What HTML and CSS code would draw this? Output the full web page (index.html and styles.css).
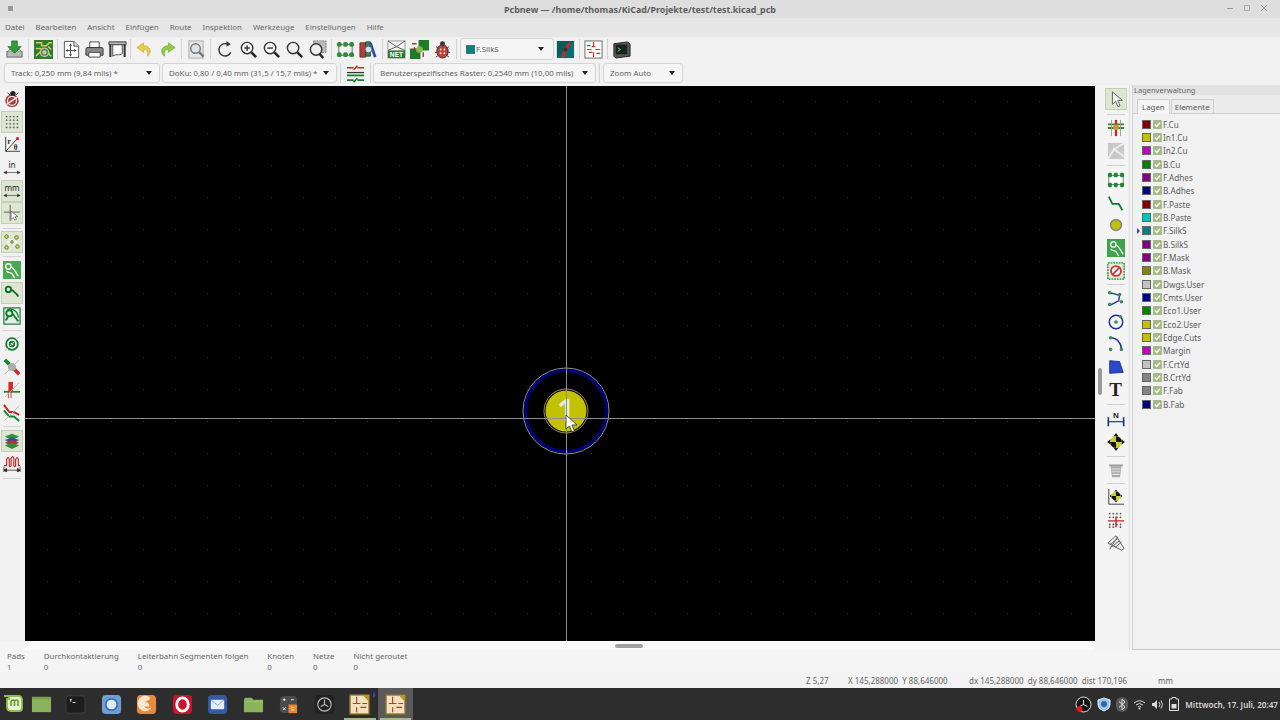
FILE: index.html
```html
<!DOCTYPE html>
<html lang="de">
<head>
<meta charset="utf-8">
<title>Pcbnew</title>
<link rel="stylesheet" href="styles.css">
</head>
<body>
<svg class="defs" width="0" height="0">
  <symbol id="chk" viewBox="0 0 9 9"><rect width="9" height="9" rx="1" fill="#a4ba8c"/><path d="M2 4.6l1.8 1.8L7 2.8" fill="none" stroke="#fff" stroke-width="1.4"/></symbol>
  <symbol id="viaicon" viewBox="0 0 20 20"><path d="M3 15l3-5" stroke="#0b7a32" stroke-width="2" fill="none"/><circle cx="7" cy="7" r="3.4" fill="none" stroke="#0b7a32" stroke-width="2"/><path d="M10 8c3 0 2 3 4 4l3 4" stroke="#0b7a32" stroke-width="2" fill="none"/><path d="M5 3c6-3 12 3 12 9" stroke="#0b7a32" stroke-width="1.3" fill="none"/></symbol>
</svg>

<header class="titlebar">
  <svg class="pin" width="7" height="7" viewBox="0 0 7 7"><path d="M1 1h5v5H1z" fill="#999"/></svg>
  <span class="title-text">Pcbnew — /home/thomas/KiCad/Projekte/test/test.kicad_pcb</span>
  <div class="win-controls">
    <svg width="8" height="8" viewBox="0 0 8 8"><path d="M1 4.500h6" stroke="#999"/></svg>
    <svg width="8" height="8" viewBox="0 0 8 8"><path d="M1.500 1.500h5v5h-5z" fill="none" stroke="#aaa"/></svg>
    <svg width="8" height="8" viewBox="0 0 8 8"><path d="M1 1l6 6M7 1l-6 6" stroke="#999"/></svg>
  </div>
</header>

<nav class="menubar">
  <span>Datei</span><span>Bearbeiten</span><span>Ansicht</span><span>Einfügen</span><span>Route</span><span>Inspektion</span><span>Werkzeuge</span><span>Einstellungen</span><span>Hilfe</span>
</nav>

<div class="toolbar tb1">
  <span class="tool"><svg viewBox="0 0 20 20"><path d="M2 12h16v6H2z" fill="#b9b9b9" stroke="#666"/><path d="M3 12l3-3h8l3 3" fill="#ddd" stroke="#777"/><path d="M7 1h6v6h4l-7 7-7-7h4z" fill="#2f9e35" stroke="#14601b" stroke-width=".7"/></svg></span>
  <i class="sep sep-a"></i>
  <span class="tool"><svg viewBox="0 0 20 20"><rect x="0" y="0" width="20" height="20" fill="#2d7a32"/><path d="M2 3h6v3h5l3-3h3M2 17l5-5h6l5 5M2 9h5l3 3M15 7l3 3" stroke="#d9c94a" stroke-width="1.600" fill="none"/><circle cx="11" cy="13" r="5" fill="#bcd0a8"/><circle cx="11" cy="13" r="3" fill="none" stroke="#5a7d55" stroke-width="1.400"/></svg></span>
  <i class="sep"></i>
  <span class="tool"><svg viewBox="0 0 20 20"><path d="M2.500 1.500h10l5 5v12h-15z" fill="#fff" stroke="#555"/><path d="M12.500 1.500v5h5" fill="#ddd" stroke="#555"/><path d="M9 4v13M4 11h11" stroke="#444"/><path d="M9 4l-1.500 2h3zM9 17l-1.500-2h3zM4 11l2-1.500v3zM15 11l-2-1.500v3z" fill="#333"/></svg></span>
  <span class="tool"><svg viewBox="0 0 20 20"><path d="M5 2h10v6H5z" fill="#fff" stroke="#444"/><path d="M2 8h16q1 0 1 2v6H1v-6q0-2 1-2z" fill="#8a8a8a" stroke="#333"/><path d="M4 13h12v5H4z" fill="#fff" stroke="#444"/></svg></span>
  <span class="tool"><svg viewBox="0 0 20 20"><path d="M1 2h18v3H1z" fill="#bbb" stroke="#333"/><path d="M2.500 5v13M17.500 5v13" stroke="#333" stroke-width="2.200"/><path d="M5 5h10v9c-1 3-6 0-10 3z" fill="#fff" stroke="#444"/></svg></span>
  <i class="sep sep-n"></i>
  <span class="tool"><svg viewBox="0 0 20 20"><path d="M9 3L2 8l7 5v-3c4 0 5 2 4 7 5-3 4-11-4-11z" fill="#ecc94f" stroke="#c7a11f" stroke-width=".6"/></svg></span>
  <span class="tool"><svg viewBox="0 0 20 20"><path d="M11 3l7 5-7 5v-3c-4 0-5 2-4 7-5-3-4-11 4-11z" fill="#8fcc3f" stroke="#64a321" stroke-width=".6"/></svg></span>
  <i class="sep sep-a"></i>
  <span class="tool"><svg viewBox="0 0 20 20"><rect x="2" y="1" width="15" height="18" fill="#e6e6e6" stroke="#aaa"/><circle cx="9" cy="9" r="5" fill="#d8e2ea" stroke="#777" stroke-width="1.500"/><path d="M12.500 12.500l5 5" stroke="#777" stroke-width="2.400"/></svg></span>
  <i class="sep sep-a"></i>
  <span class="tool"><svg viewBox="0 0 20 20"><path d="M15.500 13A6.500 6.500 0 1 1 11 4" fill="none" stroke="#333" stroke-width="1.500"/><path d="M11 1l4.500 3.500L11 7z" fill="#333"/></svg></span>
  <span class="tool"><svg viewBox="0 0 20 20"><circle cx="8.500" cy="8.500" r="6" fill="#fff" stroke="#333" stroke-width="1.500"/><path d="M5.500 8.500h6M8.500 5.500v6" stroke="#333" stroke-width="1.500"/><path d="M13 13l5 5" stroke="#222" stroke-width="2.600"/></svg></span>
  <span class="tool"><svg viewBox="0 0 20 20"><circle cx="8.500" cy="8.500" r="6" fill="#fff" stroke="#333" stroke-width="1.500"/><path d="M5.500 8.500h6" stroke="#333" stroke-width="1.500"/><path d="M13 13l5 5" stroke="#222" stroke-width="2.600"/></svg></span>
  <span class="tool"><svg viewBox="0 0 20 20"><circle cx="8.500" cy="8.500" r="6" fill="#eee" stroke="#333" stroke-width="1.500"/><path d="M13 13l5 5" stroke="#222" stroke-width="2.600"/></svg></span>
  <span class="tool"><svg viewBox="0 0 20 20"><rect x="6" y="1" width="13" height="12" fill="#bbb" stroke="#777" stroke-dasharray="2 1"/><circle cx="8.500" cy="10" r="6" fill="#eee" stroke="#333" stroke-width="1.500"/><path d="M12 14.500l4 4.500" stroke="#222" stroke-width="2.600"/></svg></span>
  <i class="sep"></i>
  <span class="tool"><svg viewBox="0 0 20 20"><rect x="3" y="5" width="14" height="11" fill="#f2f2f2" stroke="#666"/><g fill="#2e8b3a"><rect x="1" y="2" width="5" height="5" rx="2"/><rect x="7.500" y="2" width="5" height="5" rx="2"/><rect x="14" y="2" width="5" height="5" rx="2"/><rect x="1" y="13" width="5" height="5" rx="2"/><rect x="7.500" y="13" width="5" height="5" rx="2"/><rect x="14" y="13" width="5" height="5" rx="2"/></g></svg></span>
  <span class="tool"><svg viewBox="0 0 20 20"><path d="M1 3h6v15H1z" fill="#b83a3a" stroke="#632"/><path d="M7 2h5v15H7z" fill="#3a8a4a" stroke="#243"/><path d="M12 3l5 15" stroke="#2c4fa8" stroke-width="3"/><circle cx="10" cy="10" r="3.500" fill="#cfe3ec" stroke="#567"/></svg></span>
  <i class="sep"></i>
  <span class="tool"><svg viewBox="0 0 20 20"><rect x="1" y="1" width="18" height="18" fill="#f4f4f4" stroke="#999"/><path d="M1 1l9 6 9-6M1 11l9-4 9 4" stroke="#555" fill="none"/><rect x="1" y="11" width="18" height="8" fill="#2c7a34"/><text x="10" y="18" class="svg-net">NET</text></svg></span>
  <span class="tool"><svg viewBox="0 0 20 20"><rect x="0" y="0" width="20" height="20" fill="#1f7a2c"/><path d="M0 0h9v9H0zM11 11h9v9h-9z" fill="#f3f3f3"/><path d="M4 8l5 5M2 4h5M14 13v5" stroke="#b33" stroke-width="1.500"/><circle cx="10" cy="10" r="3.500" fill="#86c04a"/></svg></span>
  <span class="tool"><svg viewBox="0 0 20 20"><ellipse cx="10" cy="12" rx="6" ry="7" fill="#b8433c" stroke="#5a201c"/><circle cx="10" cy="4" r="2.600" fill="#333"/><path d="M3 7l3 2M17 7l-3 2M2 13h3M18 13h-3M3 18l3-2M17 18l-3-2" stroke="#444"/><g fill="#eec"><circle cx="8" cy="10" r="1"/><circle cx="12" cy="10" r="1"/><circle cx="8" cy="14" r="1"/><circle cx="12" cy="14" r="1"/></g></svg></span>
  <i class="sep"></i>
  <div class="combo combo-layer"><span class="swatch c-teal"></span><span class="combo-label">F.SilkS</span><i class="caret"></i></div>
  <span class="tool"><svg viewBox="0 0 20 20"><rect x="1" y="1" width="18" height="18" fill="#0e6e6e"/><path d="M1 1h18L1 19z" fill="#0a5c5c"/><path d="M15 3l-6 8-1 8" stroke="#a33" stroke-width="3.500" fill="none"/><circle cx="10" cy="10" r="2" fill="#333"/></svg></span>
  <i class="sep"></i>
  <span class="tool"><svg viewBox="0 0 20 20"><rect x="1" y="1" width="18" height="18" fill="#fff" stroke="#666"/><path d="M10 2v5M3 10h5M12 10h5M10 13v5M8 7h4M5 13h4" stroke="#c33" stroke-width="1.300"/><path d="M3 6h4M13 14h4" stroke="#2a8a3a" stroke-width="1.300"/></svg></span>
  <i class="sep"></i>
  <span class="tool"><svg viewBox="0 0 20 20"><path d="M2 4l14-2 3 2v13l-15 2-2-2z" fill="#555" stroke="#222"/><rect x="4" y="5" width="12" height="10" fill="#16251a"/><path d="M6 8l3 2-3 2" stroke="#5ecb5e" fill="none"/></svg></span>
</div>

<div class="toolbar tb2">
  <div class="combo combo-track"><span class="combo-label">Track: 0,250 mm (9,84 mils) *</span><i class="caret"></i></div>
  <div class="combo combo-via"><span class="combo-label">DoKu: 0,80 / 0,40 mm (31,5 / 15,7 mils) *</span><i class="caret"></i></div>
  <i class="sep sep-combo"></i>
  <span class="tool tool-wide"><svg viewBox="0 0 20 20"><path d="M1 4h7M12 4h7" stroke="#c22" stroke-width="1.600"/><path d="M8 6l4-4" stroke="#c22" stroke-width="1.600"/><path d="M1 9h18" stroke="#333" stroke-width="1.300"/><path d="M1 12h18" stroke="#1d8a2e" stroke-width="2"/><path d="M1 17h7M12 17h7M8 19l4-4" stroke="#1d7a2e" stroke-width="1.800"/></svg></span>
  <i class="sep sep-combo"></i>
  <div class="combo combo-grid"><span class="combo-label">Benutzerspezifisches Raster: 0,2540 mm (10,00 mils)</span><i class="caret"></i></div>
  <i class="sep sep-combo"></i>
  <div class="combo combo-zoom"><span class="combo-label">Zoom Auto</span><i class="caret"></i></div>
</div>

<main class="workspace">
  <aside class="side side-left">
    <span class="vtool"><svg viewBox="0 0 20 20"><ellipse cx="10" cy="12" rx="7.500" ry="7" fill="#a83a3a"/><circle cx="11" cy="4" r="3" fill="#222"/><path d="M4 16L16 8" stroke="#eee" stroke-width="1.600"/><circle cx="10" cy="12" r="5" fill="none" stroke="#eee" stroke-width="1.300"/><path d="M5 3l3 3M17 3l-3 3" stroke="#333"/></svg></span>
    <span class="vtool on"><svg viewBox="0 0 20 20"><g fill="#666"><circle cx="4" cy="4" r="1"/><circle cx="8" cy="4" r="1"/><circle cx="12" cy="4" r="1"/><circle cx="16" cy="4" r="1"/><circle cx="4" cy="8" r="1"/><circle cx="8" cy="8" r="1"/><circle cx="12" cy="8" r="1"/><circle cx="16" cy="8" r="1"/><circle cx="4" cy="12" r="1"/><circle cx="8" cy="12" r="1"/><circle cx="12" cy="12" r="1"/><circle cx="16" cy="12" r="1"/><circle cx="4" cy="16" r="1"/><circle cx="8" cy="16" r="1"/><circle cx="12" cy="16" r="1"/><circle cx="16" cy="16" r="1"/></g></svg></span>
    <span class="vtool"><svg viewBox="0 0 20 20"><path d="M3 1v16h16" fill="none" stroke="#333"/><path d="M3 17L16 3" stroke="#333"/><circle cx="16" cy="3" r="1.800" fill="#d22"/><text x="5" y="9" class="svg-polar">r</text><text x="12" y="16" class="svg-polar">θ</text></svg></span>
    <span class="vtool"><svg viewBox="0 0 20 20"><text x="10" y="10" class="svg-unit">in</text><path d="M1 15h18M1 15l3-1.500v3zM19 15l-3-1.500v3z" stroke="#333" fill="#333" stroke-width=".7"/></svg></span>
    <span class="vtool on"><svg viewBox="0 0 20 20"><text x="10" y="10" class="svg-unit">mm</text><path d="M1 15h18M1 15l3-1.500v3zM19 15l-3-1.500v3z" stroke="#333" fill="#333" stroke-width=".7"/></svg></span>
    <span class="vtool on"><svg viewBox="0 0 20 20"><path d="M8 1v18M1 9h18" stroke="#555"/><path d="M9 8v9l2.500-2 1.500 3 2-1-1.500-3h3z" fill="#fff" stroke="#777"/></svg></span>
    <i class="hsep"></i>
    <span class="vtool on"><svg viewBox="0 0 20 20"><path d="M4 4l12 12M16 4L4 16M4 10h12" stroke="#fff" stroke-width="1.500"/><g fill="#d8d23a" stroke="#5c7a3d"><circle cx="4" cy="4" r="2"/><circle cx="15" cy="5" r="2"/><circle cx="4" cy="16" r="2"/><circle cx="16" cy="15" r="2"/><circle cx="10" cy="10" r="1.500"/></g></svg></span>
    <i class="hsep hsep-s"></i>
    <span class="vtool active"><svg viewBox="0 0 20 20"><rect width="20" height="20" fill="#4aa84f"/><circle cx="6" cy="6" r="3" fill="none" stroke="#fff" stroke-width="1.500"/><path d="M9 7c3 0 3 3 5 5l3 5M4 11c2 3 4 1 6 3l3 5" stroke="#fff" stroke-width="1.500" fill="none"/></svg></span>
    <span class="vtool on"><svg viewBox="0 0 20 20"><circle cx="6" cy="6" r="3" fill="none" stroke="#0b6b2a" stroke-width="2"/><path d="M9 7c3-1 3 3 6 4l2 3" stroke="#0b6b2a" stroke-width="2" fill="none"/></svg></span>
    <span class="vtool"><svg viewBox="0 0 20 20"><rect x="1" y="1" width="18" height="18" fill="#e6efdf" stroke="#0b6b2a" stroke-width="1.200"/><use href="#viaicon"/></svg></span>
    <i class="hsep"></i>
    <span class="vtool"><svg viewBox="0 0 20 20"><circle cx="10" cy="10" r="6.500" fill="none" stroke="#0b7a32" stroke-width="2"/><circle cx="10" cy="10" r="2.500" fill="none" stroke="#0b7a32" stroke-width="2"/><path d="M2 18L18 2" stroke="#bbb"/></svg></span>
    <span class="vtool"><svg viewBox="0 0 20 20"><path d="M2 2l5 5" stroke="#0b8a30" stroke-width="4"/><path d="M12 12l6 6" stroke="#c62a2a" stroke-width="4"/><circle cx="10" cy="10" r="4.500" fill="#aaa"/><path d="M2 18L18 2" stroke="#bbb"/></svg></span>
    <span class="vtool"><svg viewBox="0 0 20 20"><path d="M1 12h18" stroke="#1d8a2e" stroke-width="2"/><path d="M6 1h5v11H6z" fill="#d22"/><path d="M6 12v7M9 12v7" stroke="#c33"/><path d="M2 18L18 2" stroke="#bbb"/></svg></span>
    <span class="vtool"><svg viewBox="0 0 20 20"><path d="M1 1l6 8h5l6 3" stroke="#c22" stroke-width="2.200" fill="none"/><path d="M1 7l6 7h5l6 5" stroke="#0b8a30" stroke-width="2.200" fill="none"/><path d="M2 18L18 2" stroke="#bbb"/></svg></span>
    <i class="hsep hsep-s"></i>
    <span class="vtool on"><svg viewBox="0 0 20 20"><path d="M10 2l8 3-8 4-8-4z" fill="#2f8f3a"/><path d="M10 6l8 3-8 4-8-4z" fill="#2f4fa0"/><path d="M10 9l8 3-8 4-8-4z" fill="#b8332f"/><path d="M10 12l8 3-8 4-8-4z" fill="#2f8f3a"/></svg></span>
    <span class="vtool"><svg viewBox="0 0 20 20"><path d="M1 13h3V6q2-4 3 0v7q1 2 2 0V5q2-4 3 0v8q1 2 2 0V6q2-4 3 0v7h2" fill="none" stroke="#b82c2c" stroke-width="1.300"/><path d="M1 18h18M1 18l3-2v4zM19 18l-3-2v4zM1 14v6M19 14v6" stroke="#222" fill="#222" stroke-width=".8"/></svg></span>
    <i class="hsep"></i>
  </aside>

  <section class="center">
    <div class="canvas">
      <svg class="pad" width="90" height="90" viewBox="0 0 90 90">
        <circle cx="45" cy="45" r="43" fill="#000" stroke="#b4b4b4" stroke-width=".8"/>
        <circle cx="45" cy="45" r="40.500" fill="none" stroke="#00007c" stroke-width="3"/>
        <circle cx="45" cy="45" r="22" fill="#000" stroke="#a88f5c" stroke-width="1"/>
        <circle cx="45" cy="45" r="20.500" fill="#c2c200"/>
        <text x="45" y="56" class="pad-num">1</text>
      </svg>
      <i class="cross-v"></i>
      <i class="cross-h"></i>
      <svg class="pointer" width="14" height="20" viewBox="0 0 14 20"><path d="M1 1v14l3.500-3 2.500 6 2.500-1-2.500-6h5z" fill="#fff" stroke="#222" stroke-width=".8"/></svg>
    </div>
    <div class="hscroll"><i class="hthumb"></i></div>
  </section>

  <aside class="side side-right">
    <span class="rtool on"><svg viewBox="0 0 20 20"><path d="M6 2v14l3.500-3.500 2.500 6 2.500-1-2.500-6h5z" fill="#f4f4f4" stroke="#555"/></svg></span>
    <i class="hsep"></i>
    <span class="rtool"><svg viewBox="0 0 20 20"><path d="M1 10h18M1 6h18" stroke="#2a8a3a" stroke-width="2"/><path d="M10 1v18" stroke="#c22" stroke-width="2.600"/><path d="M5 1v18M15 1v18" stroke="#999"/><circle cx="10" cy="9" r="3.200" fill="#c49a2c"/></svg></span>
    <span class="rtool"><svg viewBox="0 0 20 20"><rect x="1" y="1" width="18" height="18" fill="#c9c9c9"/><path d="M1 19L8 8M19 1L8 8M8 8l11 8" stroke="#eee" stroke-width="2"/><circle cx="8" cy="8" r="1.500" fill="#eee"/></svg></span>
    <i class="hsep"></i>
    <span class="rtool"><svg viewBox="0 0 20 20"><rect x="2" y="5" width="16" height="10" fill="#fff" stroke="#777"/><g fill="#1d8a33"><rect x="1" y="2" width="4.500" height="5" rx="1.500"/><rect x="7.500" y="2" width="4.500" height="5" rx="1.500"/><rect x="14.500" y="2" width="4.500" height="5" rx="1.500"/><rect x="1" y="13" width="4.500" height="5" rx="1.500"/><rect x="7.500" y="13" width="4.500" height="5" rx="1.500"/><rect x="14.500" y="13" width="4.500" height="5" rx="1.500"/></g></svg></span>
    <span class="rtool"><svg viewBox="0 0 20 20"><path d="M2 3l4 8h7l4 7" fill="none" stroke="#0b7a32" stroke-width="2"/></svg></span>
    <span class="rtool"><svg viewBox="0 0 20 20"><circle cx="10" cy="10" r="6" fill="#c2c200" stroke="#888" stroke-width="1.800"/></svg></span>
    <span class="rtool active"><svg viewBox="0 0 20 20"><rect width="20" height="20" fill="#3fa34d"/><circle cx="7" cy="6" r="3" fill="none" stroke="#eee" stroke-width="1.500"/><path d="M10 7c3 0 3 3 5 5l3 5M4 11c2 3 4 1 6 3l3 5" stroke="#eee" stroke-width="1.500" fill="none"/></svg></span>
    <span class="rtool"><svg viewBox="0 0 20 20"><rect x="1" y="1" width="18" height="18" fill="#ddebd6" stroke="#1d8a33" stroke-width="1.500" stroke-dasharray="2 1"/><circle cx="10" cy="10" r="5.500" fill="#fff" stroke="#d3302f" stroke-width="2"/><path d="M6 14l8-8" stroke="#d3302f" stroke-width="2"/></svg></span>
    <i class="hsep hsep-s"></i>
    <span class="rtool"><svg viewBox="0 0 20 20"><path d="M3 3l11 3-1 6-10 5" fill="none" stroke="#1a2f9c" stroke-width="1.500"/><g fill="#3c8f57"><circle cx="3" cy="3" r="2"/><circle cx="14" cy="5" r="2"/><circle cx="16" cy="13" r="2"/><circle cx="3" cy="16" r="2"/></g></svg></span>
    <span class="rtool"><svg viewBox="0 0 20 20"><circle cx="10" cy="10" r="7.500" fill="none" stroke="#1a2f9c" stroke-width="1.600"/><circle cx="10" cy="10" r="2" fill="#3c8f57"/><circle cx="15" cy="4" r="1.800" fill="#3c8f57"/></svg></span>
    <span class="rtool"><svg viewBox="0 0 20 20"><path d="M4 3c7 0 12 6 12 13" fill="none" stroke="#1a2f9c" stroke-width="1.600"/><g fill="#3c8f57"><circle cx="4" cy="3" r="2"/><circle cx="16" cy="16" r="2"/><circle cx="4" cy="16" r="2"/></g></svg></span>
    <span class="rtool"><svg viewBox="0 0 20 20"><path d="M3 3l11 1 4 12-15 1z" fill="#2a49c8" stroke="#1a2f9c"/></svg></span>
    <span class="rtool"><span class="glyph-t">T</span></span>
    <i class="hsep"></i>
    <span class="rtool"><svg viewBox="0 0 20 20"><text x="10" y="9" class="svg-dim">N</text><path d="M1 13h18" stroke="#1a2f9c" stroke-width="1.300"/><path d="M1.500 8v10M18.500 8v10" stroke="#1a2f9c" stroke-width="1.800"/></svg></span>
    <span class="rtool"><svg viewBox="0 0 20 20"><path d="M10 0l3 4H7zM10 20l3-4H7zM0 10l4-3v6zM20 10l-4-3v6z" fill="#222"/><circle cx="10" cy="10" r="6.500" fill="#c9cf2c"/><path d="M10 3.500a6.500 6.500 0 0 1 6.500 6.500H10zM10 10H3.500a6.500 6.500 0 0 0 6.500 6.500z" fill="#111"/></svg></span>
    <i class="hsep"></i>
    <span class="rtool"><svg viewBox="0 0 20 20"><path d="M2 4h16l-1 2H3z" fill="#999"/><path d="M4 6h12l-1.500 12h-9z" fill="#aaa"/><path d="M5 9h10M5 12h10M6 15h8" stroke="#eee"/></svg></span>
    <i class="hsep hsep-xs"></i>
    <span class="rtool"><svg viewBox="0 0 20 20"><path d="M2 1v17h17" fill="none" stroke="#333"/><path d="M10 2l2 2h-4zM10 16l2-2H8zM3 9l2-2v4zM17 9l-2-2v4z" fill="#222"/><circle cx="10" cy="9" r="5" fill="#c9cf2c"/><path d="M10 4a5 5 0 0 1 5 5h-5zM10 9H5a5 5 0 0 0 5 5z" fill="#111"/></svg></span>
    <span class="rtool"><svg viewBox="0 0 20 20"><g fill="#555"><circle cx="3" cy="3" r="1"/><circle cx="7" cy="3" r="1"/><circle cx="11" cy="3" r="1"/><circle cx="15" cy="3" r="1"/><circle cx="3" cy="7" r="1"/><circle cx="7" cy="7" r="1"/><circle cx="11" cy="7" r="1"/><circle cx="15" cy="7" r="1"/><circle cx="3" cy="15" r="1"/><circle cx="7" cy="15" r="1"/><circle cx="11" cy="15" r="1"/><circle cx="15" cy="15" r="1"/><circle cx="3" cy="18" r="1"/><circle cx="7" cy="18" r="1"/><circle cx="15" cy="18" r="1"/></g><path d="M1 11h18M10 6v12" stroke="#c22" stroke-width="1.600"/></svg></span>
    <span class="rtool"><svg viewBox="0 0 20 20"><path d="M1 10l9-8 9 14-3 2z" fill="#f2f2f2" stroke="#555"/><path d="M3 12l9-7M6 14l8-7M9 15l7-6M12 3l-9 14" stroke="#555"/></svg></span>
    <i class="vthumb"></i>
  </aside>

  <aside class="layers">
    <div class="layers-title">Lagenverwaltung</div>
    <div class="tabs"><span class="tab tab-on">Lagen</span><span class="tab">Elemente</span></div>
    <ul class="layer-list">
      <li><span class="swatch c-red"></span><svg class="chk"><use href="#chk"/></svg>F.Cu</li>
      <li><span class="swatch c-yellow"></span><svg class="chk"><use href="#chk"/></svg>In1.Cu</li>
      <li><span class="swatch c-magenta"></span><svg class="chk"><use href="#chk"/></svg>In2.Cu</li>
      <li><span class="swatch c-green"></span><svg class="chk"><use href="#chk"/></svg>B.Cu</li>
      <li><span class="swatch c-purple"></span><svg class="chk"><use href="#chk"/></svg>F.Adhes</li>
      <li><span class="swatch c-navy"></span><svg class="chk"><use href="#chk"/></svg>B.Adhes</li>
      <li><span class="swatch c-red"></span><svg class="chk"><use href="#chk"/></svg>F.Paste</li>
      <li><span class="swatch c-cyan"></span><svg class="chk"><use href="#chk"/></svg>B.Paste</li>
      <li class="current"><span class="swatch c-teal"></span><svg class="chk"><use href="#chk"/></svg>F.SilkS</li>
      <li><span class="swatch c-purple"></span><svg class="chk"><use href="#chk"/></svg>B.SilkS</li>
      <li><span class="swatch c-purple"></span><svg class="chk"><use href="#chk"/></svg>F.Mask</li>
      <li><span class="swatch c-olive"></span><svg class="chk"><use href="#chk"/></svg>B.Mask</li>
      <li><span class="swatch c-silver"></span><svg class="chk"><use href="#chk"/></svg>Dwgs.User</li>
      <li><span class="swatch c-navy"></span><svg class="chk"><use href="#chk"/></svg>Cmts.User</li>
      <li><span class="swatch c-green"></span><svg class="chk"><use href="#chk"/></svg>Eco1.User</li>
      <li><span class="swatch c-yellow"></span><svg class="chk"><use href="#chk"/></svg>Eco2.User</li>
      <li><span class="swatch c-yellow"></span><svg class="chk"><use href="#chk"/></svg>Edge.Cuts</li>
      <li><span class="swatch c-magenta"></span><svg class="chk"><use href="#chk"/></svg>Margin</li>
      <li><span class="swatch c-silver"></span><svg class="chk"><use href="#chk"/></svg>F.CrtYd</li>
      <li><span class="swatch c-gray"></span><svg class="chk"><use href="#chk"/></svg>B.CrtYd</li>
      <li><span class="swatch c-gray"></span><svg class="chk"><use href="#chk"/></svg>F.Fab</li>
      <li><span class="swatch c-navy"></span><svg class="chk"><use href="#chk"/></svg>B.Fab</li>
    </ul>
  </aside>
</main>

<section class="msgpanel">
  <div class="msg"><span>Pads</span><span>1</span></div>
  <div class="msg"><span>Durchkontaktierung</span><span>0</span></div>
  <div class="msg"><span>Leiterbahn Segmenten folgen</span><span>0</span></div>
  <div class="msg"><span>Knoten</span><span>0</span></div>
  <div class="msg"><span>Netze</span><span>0</span></div>
  <div class="msg"><span>Nicht geroutet</span><span>0</span></div>
</section>

<footer class="statusbar">
  <span class="st st-z">Z 5,27</span>
  <span class="st st-xy">X 145,288000&nbsp; Y 88,646000</span>
  <span class="st st-d">dx 145,288000&nbsp; dy 88,646000&nbsp; dist 170,196</span>
  <span class="st st-u">mm</span>
</footer>

<div class="taskbar">
  <span class="mint"><svg width="22" height="22" viewBox="0 0 22 22"><path d="M1 3h5v3h-2v8q0 4 4 4h8q3 0 3-3V7q0-4-4-4H6" fill="#e8f3d6" stroke="#8fc04a" stroke-width="1.800"/><path d="M8 13V8M8 8q2.500-2 3.500 0v5M11.500 8q2.500-2 3.500 0v5" fill="none" stroke="#5d9a1f" stroke-width="1.600"/></svg></span>
  <span class="launch first"><svg viewBox="0 0 22 22"><rect x="1" y="3" width="20" height="16" fill="#8ab35c"/><rect x="1" y="3" width="20" height="3" fill="#7aa34c"/></svg></span>
  <span class="launch"><svg viewBox="0 0 22 22"><rect x="1" y="2" width="20" height="18" rx="3" fill="#1d1d1d" stroke="#3e3e3e"/><path d="M5 6h2M6 5v3M8 9h3" stroke="#ddd" stroke-width="1.100"/></svg></span>
  <span class="launch"><svg viewBox="0 0 22 22"><rect x="1" y="1" width="20" height="20" rx="4" fill="#6f9fd2"/><circle cx="11" cy="11" r="6" fill="#dcebf7" stroke="#3a6fb0" stroke-width="1.800"/></svg></span>
  <span class="launch"><svg viewBox="0 0 22 22"><rect x="1" y="1" width="20" height="20" rx="4" fill="#e88a3a"/><path d="M15 4a8 8 0 1 0 2 9c-2 3-7 3-8 0h5c0-3-2-5-5-4 2-2 5-2 6-5z" fill="#fbe6cf"/></svg></span>
  <span class="launch"><svg viewBox="0 0 22 22"><rect x="1" y="1" width="20" height="20" rx="4" fill="#c9142b"/><ellipse cx="11" cy="11" rx="6" ry="7" fill="none" stroke="#fff" stroke-width="3"/></svg></span>
  <span class="launch"><svg viewBox="0 0 22 22"><rect x="1" y="1" width="20" height="20" rx="4" fill="#3558a8"/><rect x="4" y="6" width="14" height="10" rx="1" fill="#e4ecf7"/><path d="M4 6l7 6 7-6" fill="none" stroke="#8aa4d0"/></svg></span>
  <span class="launch"><svg viewBox="0 0 22 22"><path d="M1 6l1-2h7l2 2h10v13H1z" fill="#8ab35c"/><path d="M1 8h20" stroke="#9cc46e"/></svg></span>
  <span class="launch"><svg viewBox="0 0 22 22"><rect x="2" y="2" width="18" height="18" rx="4" fill="#4a4a4a"/><rect x="11" y="11" width="9" height="9" fill="#e8872b"/><path d="M5 6h3M6.500 4.500v3M13.500 6h3M5 14l3 3M8 14l-3 3M14 14h3M14 16.500h3" stroke="#eee"/></svg></span>
  <span class="launch"><svg viewBox="0 0 22 22"><rect x="1" y="1" width="20" height="20" rx="4" fill="#222"/><circle cx="11" cy="11" r="7" fill="none" stroke="#bbb" stroke-width="1.200"/><path d="M11 11l-4 2M11 11l4 2M11 11V6" stroke="#bbb" stroke-width="1.200"/></svg></span>
  <span class="launch running"><svg viewBox="0 0 22 22"><rect x="1" y="1" width="20" height="20" fill="#f3e0bc" stroke="#8a6a2a" stroke-width="1.400"/><path d="M14 1h7v7z" fill="#b8952c"/><path d="M8 3v7M4 10h8M8 14v5M12 14h6M14 10h5" stroke="#a5432c" stroke-width="1.200"/></svg></span>
  <span class="launch running current"><svg viewBox="0 0 22 22"><rect x="1" y="1" width="20" height="20" fill="#f3e0bc" stroke="#8a6a2a" stroke-width="1.400"/><path d="M14 1h7v7z" fill="#b8952c"/><path d="M8 3v7M4 10h8M8 14v5M12 14h6M14 10h5" stroke="#a5432c" stroke-width="1.200"/></svg></span>
  <div class="tray">
    <svg width="17" height="17" viewBox="0 0 17 17"><circle cx="8.500" cy="8.500" r="7.500" fill="#161616" stroke="#ddd"/><path d="M8.500 8.500l-4 2M8.500 8.500l4 2M8.500 8.500V4" stroke="#ddd"/><circle cx="4.500" cy="13" r="3" fill="#e01818"/></svg>
    <svg width="14" height="15" viewBox="0 0 14 15"><path d="M7 1l6 2v5q0 4-6 6-6-2-6-6V3z" fill="#9cc4e8" stroke="#e4eef7"/><circle cx="7" cy="7" r="3" fill="#2a69ae"/></svg>
    <svg width="12" height="15" viewBox="0 0 12 15"><rect x="0" y="0" width="12" height="15" rx="6" fill="#5a5a5a"/><path d="M3 4.500l6 5.500-3 3V2l3 3-6 5.500" fill="none" stroke="#ddd"/></svg>
    <svg width="13" height="11" viewBox="0 0 13 11"><path d="M1 4q5.500-4.500 11 0M3 6q3.500-3 7 0M5 8q1.500-1.500 3 0" fill="none" stroke="#ddd"/><circle cx="6.500" cy="9.500" r="1" fill="#ddd"/></svg>
    <svg width="13" height="11" viewBox="0 0 13 11"><path d="M1 4h2l3-3v9L3 7H1z" fill="#ddd"/><path d="M8 3q2 2.500 0 5M10 1.500q3 4 0 8" fill="none" stroke="#ddd"/></svg>
    <svg width="10" height="14" viewBox="0 0 10 14"><path d="M3 .5h4v1.500h2.500v11.500h-9V2H3z" fill="none" stroke="#ddd"/><path d="M2.500 7h5v4.500h-5z" fill="#ddd"/></svg>
    <span class="clock">Mittwoch, 17. Juli, 20:47</span>
  </div>
</div>
</body>
</html>
```

FILE: styles.css
```css
* { box-sizing: border-box; }
html, body { margin: 0; padding: 0; }
body {
  width: 1280px;
  height: 720px;
  overflow: hidden;
  display: flex;
  flex-direction: column;
  font-family: "Noto Sans", sans-serif;
  font-size: 7.900px;
  color: #5a5a5a;
  background: #f2f2f2;
}
.defs { position: absolute; }
svg { display: block; flex: none; }

.titlebar {
  height: 18px;
  flex: none;
  display: flex;
  align-items: center;
  justify-content: center;
  position: relative;
  background: #dedede;
}
.pin { position: absolute; left: 7px; top: 5px; }
.title-text { font-weight: 700; font-size: 8.900px; color: #5c5c5c; }
.win-controls {
  position: absolute;
  right: 12px;
  top: 4px;
  display: flex;
  gap: 9px;
}

.menubar {
  height: 19px;
  flex: none;
  display: flex;
  align-items: center;
  gap: 11px;
  padding-left: 5px;
  padding-bottom: 1px;
  background: #e6e6e6;
  color: #666;
}

.toolbar {
  flex: none;
  display: flex;
  align-items: center;
  background: #f1f1f1;
}
.tb1 { height: 25px; padding-left: 3px; padding-bottom: 1px; }
.tb2 { height: 23px; padding-left: 4px; padding-bottom: 1px; }

.tool {
  width: 23px;
  height: 22px;
  display: flex;
  align-items: center;
  justify-content: center;
  flex: none;
}
.tool svg { width: 19px; height: 19px; }
.tool-wide { width: 24px; }
.sep {
  width: 1px;
  height: 20px;
  margin: 0 2px;
  background: #d2d2d2;
  flex: none;
}
.sep-a { margin: 0 3px 0 2px; }
.sep-n { margin: 0 2px 0 1px; }
.sep-combo { margin: 0 2px 0 3px; }

.combo {
  height: 20px;
  flex: none;
  display: flex;
  align-items: center;
  justify-content: space-between;
  padding: 0 7px 0 6px;
  background: #f5f5f5;
  border: 1px solid #d4d4d4;
  border-radius: 3px;
  color: #5f5f5f;
}
.combo-track { width: 156px; margin-right: 2px; }
.combo-via { width: 175px; }
.combo-grid { width: 223px; }
.combo-zoom { width: 80px; margin-left: 1px; }
.combo-layer {
  width: 94px;
  height: 22px;
  margin-left: 1px;
  padding: 0 9px 0 5px;
  justify-content: flex-start;
}
.combo-layer .caret { margin-left: auto; }
.caret {
  width: 0;
  height: 0;
  border-left: 3.5px solid transparent;
  border-right: 3.5px solid transparent;
  border-top: 4px solid #222;
  flex: none;
}

.swatch {
  width: 9px;
  height: 9px;
  border: 1px solid #666;
  flex: none;
}
.combo-layer .swatch { margin-right: 1px; }
.c-red { background: #840000; }
.c-yellow { background: #c2c200; }
.c-magenta { background: #c200c2; }
.c-green { background: #008400; }
.c-purple { background: #840084; }
.c-navy { background: #000084; }
.c-cyan { background: #00c2c2; }
.c-teal { background: #008484; }
.c-olive { background: #848400; }
.c-silver { background: #c2c2c2; }
.c-gray { background: #848484; }

.workspace {
  height: 565px;
  flex: none;
  display: flex;
  background: #f5f5f5;
}
.side {
  flex: none;
  display: flex;
  flex-direction: column;
  align-items: center;
}
.side-left {
  width: 25px;
  padding-top: 3px;
  height: 556px;
  background: #f1f1f1;
  padding-right: 1px;
}
.side-right {
  width: 35px;
  padding: 3px 0 0 7px;
  position: relative;
  background: #f4f4f4;
  border-right: 1px solid #d8d8d8;
}
.vtool, .rtool {
  height: 22.800px;
  width: 23px;
  flex: none;
  display: flex;
  align-items: center;
  justify-content: center;
}
.vtool svg, .rtool svg { width: 18px; height: 18px; }
.vtool.on svg, .rtool.on svg {
  box-sizing: content-box;
  padding: 1px;
  background: #dde6d3;
  border: 1px solid #c3d0b6;
}
.hsep {
  width: 18px;
  height: 1px;
  margin: 3px 0 2px;
  background: #d2d2d2;
  flex: none;
}
.hsep-s { margin: 2px 0; }
.hsep-xs { margin: 1px 0 2px; }
.glyph-t {
  font-family: "Liberation Serif", serif;
  font-size: 19px;
  font-weight: 700;
  color: #222;
  line-height: 1;
}
.vthumb {
  position: absolute;
  left: 3px;
  top: 283px;
  width: 4px;
  height: 27px;
  border-radius: 2px;
  background: #999;
}

.center {
  width: 1070px;
  flex: none;
  display: flex;
  flex-direction: column;
}
.canvas {
  height: 555px;
  margin-top: 1px;
  position: relative;
  overflow: hidden;
  background-color: #000;
  background-image: radial-gradient(circle at 22.500px 15.500px, #3a3a3a 0.700px, transparent 1px);
  background-size: 32px 32px;
}
.cross-v {
  position: absolute;
  left: 541px;
  top: 0;
  bottom: 0;
  width: 1px;
  background: #8f8f8f;
}
.cross-h {
  position: absolute;
  top: 332px;
  left: 0;
  right: 0;
  height: 1px;
  background: #8f8f8f;
}
.pad { position: absolute; left: 496px; top: 280px; }
.pad-num {
  font-family: "Noto Sans", sans-serif;
  font-size: 33px;
  font-weight: 600;
  fill: #e8e8e8;
  text-anchor: middle;
}
.pointer { position: absolute; left: 540px; top: 328px; }
.hscroll {
  height: 9px;
  flex: none;
  position: relative;
  background: #fafafa;
}
.hthumb {
  position: absolute;
  left: 590px;
  top: 3px;
  width: 28px;
  height: 4px;
  border-radius: 2px;
  background: #a0a0a0;
}

.layers {
  flex: 1;
  min-width: 0;
  margin-left: 2px;
  display: flex;
  flex-direction: column;
  background: #f1f1f1;
  border-left: 1px solid #d0d0d0;
  border-bottom: 1px solid #c8c8c8;
}
.layers-title {
  height: 10px;
  font-size: 7.500px;
  line-height: 10px;
  padding-left: 1px;
  background: #e2e2e2;
  color: #666;
}
.tabs {
  height: 19px;
  display: flex;
  align-items: flex-end;
  padding-left: 4px;
  background: #ececec;
  border-bottom: 1px solid #cfcfcf;
}
.tab {
  height: 14px;
  line-height: 14px;
  padding: 0 3px;
  border: 1px solid #cfcfcf;
  border-bottom: 0;
  background: #ececec;
  margin-left: 1px;
  color: #555;
}
.tab-on { height: 15px; line-height: 15px; background: #f5f5f5; margin-bottom: -1px; padding: 0 4px; margin-left: 0; }
.layer-list {
  list-style: none;
  margin: 3.500px 0 0;
  padding: 0 0 0 9px;
}
.layer-list li {
  height: 13.330px;
  display: flex;
  align-items: center;
  position: relative;
  color: #5c5c5c;
  font-size: 8.200px;
}
.layer-list .swatch { margin-right: 2px; }
.chk { width: 9px; height: 9px; margin-right: 1px; }
.current::before {
  content: "";
  position: absolute;
  left: -5px;
  top: 4px;
  border-left: 3px solid #3b43c9;
  border-top: 3px solid transparent;
  border-bottom: 3px solid transparent;
}

.msgpanel {
  height: 22px;
  flex: none;
  display: flex;
  gap: 19px;
  padding: 1px 0 0 7px;
  background: #f5f5f5;
}
.msg {
  display: flex;
  flex-direction: column;
  line-height: 11px;
  color: #666;
}

.statusbar {
  height: 16px;
  flex: none;
  display: flex;
  justify-content: flex-end;
  align-items: center;
  background: #f3f3f3;
  color: #666;
  font-size: 8px;
}
.st-z { width: 42px; }
.st-xy { width: 121px; }
.st-d { width: 189px; }
.st-u { width: 122px; }

.taskbar {
  height: 32px;
  flex: none;
  display: flex;
  align-items: center;
  background: #2d2d2d;
}
.mint {
  width: 25px;
  padding-left: 3px;
  flex: none;
}
.launch {
  width: 35.500px;
  height: 32px;
  flex: none;
  display: flex;
  align-items: center;
  justify-content: center;
  position: relative;
}
.launch.first { width: 33px; }
.launch svg { width: 21px; height: 21px; }
.running::after {
  content: "";
  position: absolute;
  left: 2px;
  right: 2px;
  bottom: 0;
  height: 2px;
  background: #a5b98c;
}
.launch.current { background: #5a5a5a; }
.tray {
  margin-left: auto;
  display: flex;
  align-items: center;
  gap: 5px;
  padding-right: 2px;
}
.clock { font-size: 8.100px; font-weight: 600; color: #d8d8d8; margin-left: 1px; }
.svg-net { font: 700 7px "Liberation Sans", sans-serif; fill: #fff; text-anchor: middle; }
.svg-polar { font: 700 8px "Liberation Serif", serif; fill: #222; }
.svg-unit { font: 9px "Noto Sans", sans-serif; fill: #222; text-anchor: middle; }
.svg-dim { font: 700 9px "Liberation Sans", sans-serif; fill: #222; text-anchor: middle; }
```
